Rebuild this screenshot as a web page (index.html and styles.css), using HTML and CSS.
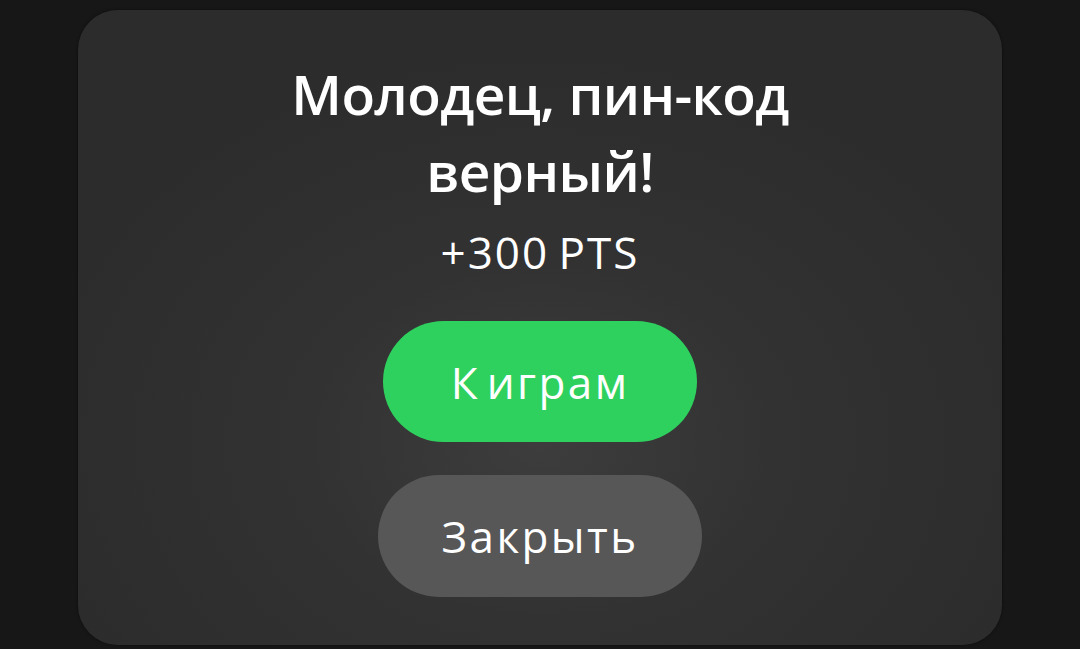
FILE: index.html
```html
<!DOCTYPE html>
<html lang="ru">
<head>
<meta charset="utf-8">
<title>Пин-код</title>
<link rel="stylesheet" href="styles.css">
</head>
<body>
<div class="screen">
  <section class="dialog">
    <h1 class="dialog-title">Молодец, пин-код<br>верный!</h1>
    <p class="dialog-reward">+300 PTS</p>
    <div class="dialog-actions">
      <button class="btn btn-primary">К играм</button>
      <button class="btn btn-secondary">Закрыть</button>
    </div>
  </section>
</div>
</body>
</html>
```

FILE: styles.css
```css
html, body {
  margin: 0;
  padding: 0;
  background: #171717;
}

.screen {
  width: 1080px;
  height: 649px;
  display: flex;
  justify-content: center;
  padding-top: 10px;
  box-sizing: border-box;
}

.dialog {
  width: 924px;
  height: 635px;
  box-sizing: border-box;
  border-radius: 40px;
  background: radial-gradient(ellipse 520px 400px at 50% 68%, #3d3d3d 0%, #323232 45%, #2c2c2c 100%);
  box-shadow: 0 0 3px rgba(0, 0, 0, 0.5);
  display: flex;
  flex-direction: column;
  align-items: center;
  padding-top: 45px;
  color: #ffffff;
  font-family: "Open Sans", "Noto Sans", sans-serif;
}

.dialog-title {
  margin: 0;
  font-size: 55px;
  font-weight: 600;
  line-height: 77px;
  text-align: center;
  letter-spacing: -0.6px;
}

.dialog-reward {
  margin: 13px 0 0;
  font-size: 44px;
  font-weight: 400;
  line-height: 60px;
  letter-spacing: 2px;
  word-spacing: -4px;
}

.dialog-actions {
  margin-top: 39px;
  display: flex;
  flex-direction: column;
  align-items: center;
  gap: 33px;
}

.btn {
  border: none;
  border-radius: 61px;
  color: #ffffff;
  font-family: "Open Sans", "Noto Sans", sans-serif;
  font-size: 44px;
  font-weight: 400;
  letter-spacing: 2.4px;
  word-spacing: -7px;
  padding: 0;
  display: flex;
  align-items: center;
  justify-content: center;
}

.btn-primary {
  width: 314px;
  height: 121px;
  background: #2fd15e;
}

.btn-secondary {
  width: 324px;
  height: 122px;
  background: #575757;
}
```
